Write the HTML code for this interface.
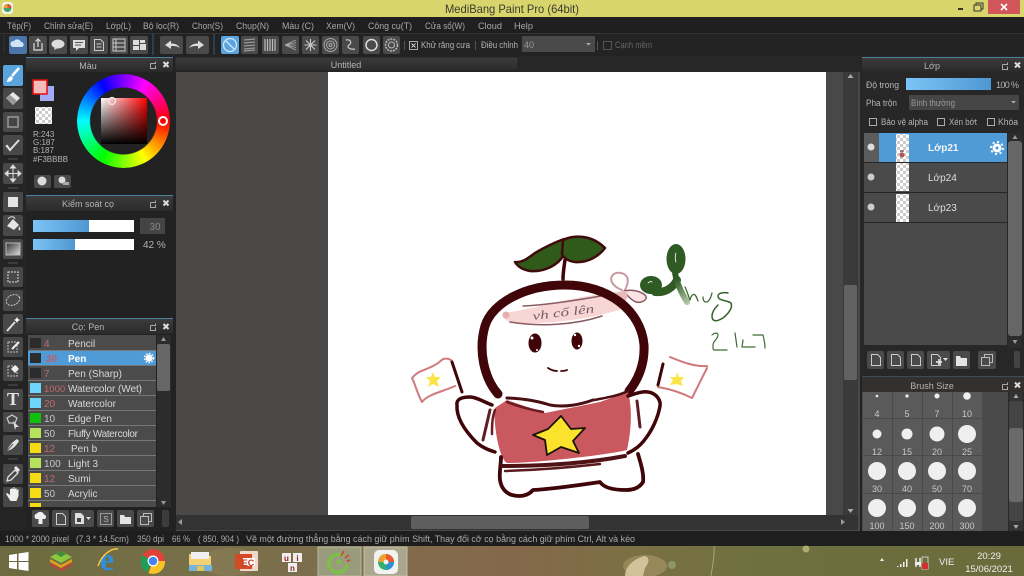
<!DOCTYPE html>
<html><head><meta charset="utf-8"><title>MediBang Paint Pro</title>
<style>
html,body{margin:0;padding:0;background:#222;overflow:hidden;width:1024px;height:576px}
svg{position:absolute;left:0;top:0}
text{font-family:"Liberation Sans","DejaVu Sans",sans-serif;font-size:9.5px;fill:#b4b4b4}
.m{font-size:9.5px;fill:#a8a8a8}
.c{text-anchor:middle}
.r{font-size:10px;fill:#d8d8d8}
.n{font-size:10px;fill:#c8c8c8}
.o{font-size:10px;fill:#c46a6a}
.s{font-size:9px;fill:#c8c8c8;text-anchor:middle}
#wheel{position:absolute;left:77px;top:74px;width:93px;height:94px;border-radius:50%;background:conic-gradient(from 30deg,#f0f,#f00 60deg,#ff0 120deg,#0f0 180deg,#0ff 240deg,#00f 300deg,#f0f 360deg);-webkit-mask:radial-gradient(circle,transparent 33px,#000 34px);mask:radial-gradient(circle,transparent 33px,#000 34px)}
#sq{position:absolute;left:101px;top:98px;width:46px;height:46px;background:linear-gradient(to top,#000,rgba(0,0,0,0)),linear-gradient(to right,#fff,#f00)}
</style></head><body>
<svg width="1024" height="576" viewBox="0 0 1024 576" xmlns="http://www.w3.org/2000/svg">
<defs>
<linearGradient id="tb" x1="0" y1="0" x2="1" y2="0"><stop offset="0" stop-color="#6c6a3e"/><stop offset=".2" stop-color="#77704a"/><stop offset=".33" stop-color="#7e6d4c"/><stop offset=".5" stop-color="#85684a"/><stop offset=".62" stop-color="#7a7044"/><stop offset=".75" stop-color="#6e7040"/><stop offset="1" stop-color="#6b6a3a"/></linearGradient>
<linearGradient id="sl" x1="0" y1="0" x2="1" y2="0"><stop offset="0" stop-color="#7cc4f6"/><stop offset="1" stop-color="#4e97d2"/></linearGradient>
<linearGradient id="hd" x1="0" y1="0" x2="0" y2="1"><stop offset="0" stop-color="#3c3c3c"/><stop offset="1" stop-color="#2a2a2a"/></linearGradient>
<linearGradient id="gr" x1="0" y1="0" x2="1" y2="1"><stop offset="0" stop-color="#333"/><stop offset="1" stop-color="#ddd"/></linearGradient>
<linearGradient id="fade" gradientUnits="userSpaceOnUse" x1="675" y1="280" x2="688" y2="304"><stop offset="0" stop-color="#2f5a23"/><stop offset="1" stop-color="#b5c8ac"/></linearGradient>
<pattern id="ck" width="6" height="6" patternUnits="userSpaceOnUse"><rect width="6" height="6" fill="#fff"/><rect width="3" height="3" fill="#ccc"/><rect x="3" y="3" width="3" height="3" fill="#ccc"/></pattern>
</defs>

<!-- Base -->
<rect width="1024" height="576" fill="#222"/>

<!-- Title bar -->
<rect width="1024" height="17" fill="#d8d56d"/>
<rect x="2" y="2" width="11" height="12" rx="3" fill="#f2f2e8"/>
<circle cx="7.5" cy="8" r="4" fill="#3fa56a"/><path d="M7.5 4a4 4 0 0 1 4 4h-4z" fill="#e8503a"/><path d="M3.5 8a4 4 0 0 1 4-4v4z" fill="#e8a03a"/>
<text x="445" y="13" style="font-size:12px;fill:#3c3c30" textLength="134" lengthAdjust="spacingAndGlyphs">MediBang Paint Pro (64bit)</text>
<rect x="958" y="8" width="5" height="2" fill="#333"/>
<rect x="974" y="5" width="7" height="6" fill="none" stroke="#333" stroke-width="1"/><path d="M976 5V3h7v6h-2" fill="none" stroke="#333"/>
<rect x="988" y="0" width="32" height="14" fill="#d15659"/>
<path d="M1001 4l6 6M1007 4l-6 6" stroke="#fff" stroke-width="1.6"/>

<!-- Menu -->
<rect y="17" width="1024" height="16" fill="#1f1f1f"/>
<text class="m" x="7" y="29" textLength="24" lengthAdjust="spacingAndGlyphs">Tệp(F)</text>
<text class="m" x="44" y="29" textLength="49" lengthAdjust="spacingAndGlyphs">Chỉnh sửa(E)</text>
<text class="m" x="106" y="29" textLength="25" lengthAdjust="spacingAndGlyphs">Lớp(L)</text>
<text class="m" x="143" y="29" textLength="36" lengthAdjust="spacingAndGlyphs">Bộ lọc(R)</text>
<text class="m" x="192" y="29" textLength="31" lengthAdjust="spacingAndGlyphs">Chọn(S)</text>
<text class="m" x="236" y="29" textLength="33" lengthAdjust="spacingAndGlyphs">Chụp(N)</text>
<text class="m" x="282" y="29" textLength="32" lengthAdjust="spacingAndGlyphs">Màu (C)</text>
<text class="m" x="326" y="29" textLength="29" lengthAdjust="spacingAndGlyphs">Xem(V)</text>
<text class="m" x="368" y="29" textLength="44" lengthAdjust="spacingAndGlyphs">Công cụ(T)</text>
<text class="m" x="425" y="29" textLength="40" lengthAdjust="spacingAndGlyphs">Cửa sổ(W)</text>
<text class="m" x="478" y="29" textLength="24" lengthAdjust="spacingAndGlyphs">Cloud</text>
<text class="m" x="514" y="29" textLength="19" lengthAdjust="spacingAndGlyphs">Help</text>

<!-- Toolbar -->
<rect y="33" width="1024" height="23" fill="#232323"/>
<rect y="33" width="1024" height="1" fill="#333"/>
<g fill="#4a4a4a">
<rect x="9" y="36" width="18" height="18" rx="2" fill="#4b74a8"/><rect x="29" y="36" width="18" height="18" rx="2"/><rect x="49" y="36" width="18" height="18" rx="2"/><rect x="70" y="36" width="18" height="18" rx="2"/><rect x="90" y="36" width="18" height="18" rx="2"/><rect x="110" y="36" width="18" height="18" rx="2"/><rect x="130" y="36" width="18" height="18" rx="2"/>
<rect x="160" y="36" width="23" height="18" rx="2"/><rect x="186" y="36" width="23" height="18" rx="2"/>
<rect x="221" y="36" width="18" height="18" rx="2" fill="#5aa4e0"/><rect x="241" y="36" width="17" height="18" rx="2"/><rect x="262" y="36" width="17" height="18" rx="2"/><rect x="282" y="36" width="17" height="18" rx="2"/><rect x="302" y="36" width="17" height="18" rx="2"/><rect x="322" y="36" width="17" height="18" rx="2"/><rect x="342" y="36" width="17" height="18" rx="2"/><rect x="363" y="36" width="17" height="18" rx="2"/><rect x="383" y="36" width="17" height="18" rx="2"/>
</g>
<path d="M153 34v21M214 34v21" stroke="#2b4a66" stroke-width="1.5"/>
<path d="M4 35v19" stroke="#333"/>
<!-- tb icons -->
<path d="M13 47a3 3 0 0 1 1-6 4 4 0 0 1 7 1 2.6 2.6 0 0 1 1 5z" fill="#cfe4f7"/>
<path d="M34 43v7h8v-7M38 47v-8M35.500 41.500l2.500-2.500 2.500 2.500" fill="none" stroke="#ddd" stroke-width="1.2"/>
<ellipse cx="58" cy="44" rx="6.500" ry="4.500" fill="#ddd"/><path d="M55 47l-1 3 4-2z" fill="#ddd"/>
<path d="M73 40h12v8h-6l-3 3v-3h-3z" fill="#ddd"/><path d="M75 42.500h8M75 45h6" stroke="#555"/>
<path d="M94.500 39.500h6l3 3v8h-9z M96.500 44h5M96.500 47h5" fill="none" stroke="#ccc"/>
<path d="M113 39h12v12h-12z M113 43h12M113 47h12M116 39v12" fill="none" stroke="#ccc"/>
<path d="M133 40h6v5h-6zM140 44h6v6h-6zM133 46h6v4h-6zM140 40h5v3h-5z" fill="#ddd"/>
<path d="M165 45l6-4.500v3c4 0 7 1 9 4.500-3-2-5-2-9-2v3z" fill="#ddd"/>
<path d="M204 45l-6-4.500v3c-4 0-7 1-9 4.500 3-2 5-2 9-2v3z" fill="#ddd"/>
<circle cx="230" cy="45" r="6.500" fill="none" stroke="#d5e8f8" stroke-width="1.300"/><path d="M225.500 40.500l9 9" stroke="#d5e8f8" stroke-width="1.300"/>
<path d="M244 40l11-1M244 43l11-1M244 46l11-1M244 49l11-1M244 51l11-1" stroke="#999" stroke-width="1.200"/>
<path d="M265 39v12M267.500 39v12M270 39v12M272.500 39v12M275 39v12" stroke="#bbb" stroke-width="1.200"/>
<path d="M285 45l11-5M285 45l11 0M285 45l11 5M285 45l11-2.500M285 45l11 2.500" stroke="#aaa" stroke-width=".8"/>
<path d="M310.500 39v12M304.500 45h12M306 40.500l9 9M315 40.500l-9 9" stroke="#ccc" stroke-width="1.100"/>
<circle cx="330.500" cy="45" r="6.500" fill="none" stroke="#aaa" stroke-width="1"/><circle cx="330.500" cy="45" r="4" fill="none" stroke="#aaa"/><circle cx="330.500" cy="45" r="1.500" fill="none" stroke="#aaa"/>
<path d="M346 40c5-1 6 3 3 5-3 2 1 5 6 4" fill="none" stroke="#ccc" stroke-width="1.200"/>
<circle cx="371.500" cy="45" r="5.500" fill="none" stroke="#ddd" stroke-width="1.500"/>
<circle cx="391.500" cy="45" r="6" fill="none" stroke="#bbb" stroke-width="1.500" stroke-dasharray="2 1"/><circle cx="391.500" cy="45" r="3" fill="none" stroke="#bbb"/>
<path d="M404.500 41v9M475.500 41v9M597.500 41v9" stroke="#555"/>
<rect x="409.500" y="41.500" width="8" height="8" fill="none" stroke="#aaa"/><path d="M411.500 43.500l4 4M415.500 43.500l-4 4" stroke="#ccc"/>
<text x="421" y="48" style="font-size:9px" textLength="49" lengthAdjust="spacingAndGlyphs">Khử răng cưa</text>
<text x="481" y="48" style="font-size:9px" textLength="37" lengthAdjust="spacingAndGlyphs">Điều chỉnh</text>
<rect x="522" y="36" width="73" height="16" fill="#4a4a4a" rx="1"/>
<text x="524" y="48" style="font-size:9px;fill:#999">40</text>
<path d="M586 43h5l-2.500 2.500z" fill="#aaa"/>
<rect x="603.500" y="41.500" width="8" height="8" fill="none" stroke="#555"/>
<text x="615" y="48" style="font-size:9px;fill:#666" textLength="37" lengthAdjust="spacingAndGlyphs">Cạnh mềm</text>

<!-- Left tools -->
<rect y="56" width="26" height="475" fill="#242424"/>
<g fill="#484848">
<rect x="3" y="65" width="20" height="21" rx="2" fill="#5aa4dc"/><rect x="3" y="88" width="20" height="21" rx="2"/><rect x="3" y="112" width="20" height="20" rx="2"/><rect x="3" y="135" width="20" height="20" rx="2"/><rect x="3" y="163" width="20" height="21" rx="2"/><rect x="3" y="192" width="20" height="20" rx="2"/><rect x="3" y="215" width="20" height="21" rx="2"/><rect x="3" y="239" width="20" height="20" rx="2"/><rect x="3" y="267" width="20" height="20" rx="2"/><rect x="3" y="290" width="20" height="21" rx="2"/><rect x="3" y="314" width="20" height="20" rx="2"/><rect x="3" y="337" width="20" height="20" rx="2"/><rect x="3" y="360" width="20" height="21" rx="2"/><rect x="3" y="389" width="20" height="21" rx="2"/><rect x="3" y="412" width="20" height="20" rx="2"/><rect x="3" y="435" width="20" height="20" rx="2"/><rect x="3" y="464" width="20" height="20" rx="2"/><rect x="3" y="487" width="20" height="20" rx="2"/>
</g>
<path d="M8 159h10M8 188h10M8 263h10M8 385h10M8 459h10" stroke="#555"/>
<path d="M19 68l-7 8" stroke="#fff" stroke-width="2.500"/><path d="M7 82c0-3 2-5 4-6l2 2c-1 3-3 4-6 4z" fill="#fff"/>
<path d="M6 98l7-6 7 6-7 7z" fill="#e8e8e8"/><path d="M6 98l4-3 7 6-4 4z" fill="#999"/>
<rect x="8" y="117" width="10" height="10" fill="#444" stroke="#999" stroke-width="1.500"/>
<path d="M7 146l3 4 9-10" fill="none" stroke="#ddd" stroke-width="2"/><circle cx="7" cy="146" r="1.300" fill="#ddd"/>
<path d="M13 166v15M6 173.500h14M13 165l-2.500 3h5zM13 182l-2.500-3h5zM5 173.500l3-2.500v5zM21 173.500l-3-2.500v5z" stroke="#ddd" fill="#ddd"/>
<rect x="8" y="197" width="10" height="10" fill="#e4e4e4"/>
<path d="M7 226l6-7 6 6-5 5z" fill="#e4e4e4"/><path d="M8 219c2-3 6-3 7 0" fill="none" stroke="#ddd"/><path d="M19 226c1 2 2 3 1 4s-2 0-1-4z" fill="#ddd"/>
<rect x="6" y="243" width="14" height="12" fill="url(#gr)" stroke="#bbb"/>
<rect x="8" y="272" width="10" height="10" fill="none" stroke="#ddd" stroke-dasharray="2 1"/>
<ellipse cx="13" cy="300" rx="7" ry="5" fill="none" stroke="#ccc" stroke-dasharray="2 1" transform="rotate(-25 13 300)"/>
<path d="M7 331l8-9" stroke="#ddd" stroke-width="2"/><path d="M17 317l1 2 2 1-2 1-1 2-1-2-2-1 2-1z" fill="#fff"/>
<rect x="8" y="342" width="9" height="10" fill="none" stroke="#bbb" stroke-dasharray="2 1"/><path d="M12 349l7-7" stroke="#eee" stroke-width="2"/>
<rect x="8" y="366" width="9" height="10" fill="none" stroke="#bbb" stroke-dasharray="2 1"/><path d="M11 369l4-4 4 4-4 4z" fill="#eee"/>
<text x="13" y="405" class="c" style="font-family:'Liberation Serif',serif;font-size:18px;font-weight:bold;fill:#e4e4e4">T</text>
<path d="M7 418l5-3 5 3-2 5-6 0z" fill="none" stroke="#ccc" stroke-width="1.200"/><path d="M13 421l6 6-3 0-1 3z" fill="#ddd"/>
<path d="M7 451c1-4 5-9 10-12l2 2c-3 5-7 9-12 10z" fill="#e4e4e4"/><path d="M7 451l6-7" stroke="#555"/>
<path d="M7 481l1-4 7-7 3 3-7 7z" fill="none" stroke="#ddd" stroke-width="1.300"/><path d="M14 468l2-2 4 4-2 2z" fill="#eee"/>
<path d="M8 497l-2-3 1-1 3 2v-6h1.500v-1h1v1l1 0v-2h1v2l1 0v-1h1v2l1 0v-1h1v7l-2 5h-6z" fill="#eee"/>

<!-- Left panels -->
<rect x="26" y="56" width="147" height="137" fill="#222"/>
<rect x="26" y="57" width="147" height="15" fill="url(#hd)"/><rect x="26" y="57" width="147" height="1" fill="#4d7f9f"/>
<text class="c" x="88" y="69" style="font-size:9px">Màu</text>
<path d="M150.500 63.500h5v-2M150.500 63.500v5h5v-3" fill="none" stroke="#aaa"/>
<path d="M163.500 62l5 5M168.500 62l-5 5" stroke="#ddd" stroke-width="2"/>
<rect x="40" y="86" width="14" height="15" fill="#a3abf2"/>
<rect x="33" y="80" width="14" height="14" fill="#f3bbbb" stroke="#e01010" stroke-width="1.500"/>
<rect x="35" y="107" width="17" height="17" fill="url(#ck)"/>
<text x="33" y="137" style="font-size:8px">R:243</text>
<text x="33" y="145" style="font-size:8px">G:187</text>
<text x="33" y="153" style="font-size:8px">B:187</text>
<text x="33" y="162" style="font-size:8px">#F3BBBB</text>
<rect x="34" y="175" width="17" height="13" rx="2" fill="#4a4a4a"/><rect x="54" y="175" width="17" height="13" rx="2" fill="#4a4a4a"/>
<circle cx="42" cy="181" r="4.500" fill="#ddd"/><circle cx="62" cy="180" r="3.500" fill="#ddd"/><rect x="63" y="182" width="6" height="3" fill="#aaa"/>

<rect x="26" y="195" width="147" height="122" fill="#222"/>
<rect x="26" y="196" width="147" height="15" fill="url(#hd)"/><rect x="26" y="195" width="147" height="1" fill="#4d7f9f"/>
<text class="c" x="88" y="207" style="font-size:9px">Kiểm soát cọ</text>
<path d="M150.500 202.500h5v-2M150.500 202.500v5h5v-3" fill="none" stroke="#aaa"/>
<path d="M163.500 200.500l5 5M168.500 200.500l-5 5" stroke="#ddd" stroke-width="2"/>
<rect x="33" y="220" width="101" height="12" fill="#fff"/><rect x="33" y="220" width="56" height="12" fill="url(#sl)"/>
<rect x="140" y="218" width="25" height="16" fill="#444"/><text x="155" y="230" class="c" style="font-size:10px;fill:#888">30</text>
<rect x="33" y="239" width="101" height="11" fill="#fff"/><rect x="33" y="239" width="42" height="11" fill="url(#sl)"/>
<text x="143" y="248" style="font-size:10px">42 %</text>

<!-- Brush list -->
<rect x="26" y="318" width="147" height="213" fill="#222"/>
<rect x="26" y="319" width="147" height="15" fill="url(#hd)"/><rect x="26" y="318" width="147" height="1" fill="#4d7f9f"/>
<text class="c" x="88" y="330" style="font-size:9px">Cọ: Pen</text>
<path d="M150.500 325.500h5v-2M150.500 325.500v5h5v-3" fill="none" stroke="#aaa"/>
<path d="M163.500 324l5 5M168.500 324l-5 5" stroke="#ddd" stroke-width="2"/>
<rect x="28" y="335" width="128" height="172" fill="#4b4b4b"/>
<rect x="28" y="351" width="128" height="15" fill="#4f9bd8"/>
<path d="M28 350.500h128M28 365.500h128M28 380.500h128M28 395.500h128M28 410.500h128M28 425.500h128M28 440.500h128M28 455.500h128M28 470.500h128M28 485.500h128M28 500.500h128" stroke="#777"/>
<g>
<rect x="30" y="338" width="11" height="10" fill="#2c2c2c"/><rect x="30" y="353" width="11" height="10" fill="#2c2c2c"/><rect x="30" y="368" width="11" height="10" fill="#2c2c2c"/>
<rect x="30" y="383" width="11" height="10" fill="#6ed4fb"/><rect x="30" y="398" width="11" height="10" fill="#6ed4fb"/><rect x="30" y="413" width="11" height="10" fill="#0fc00f"/><rect x="30" y="428" width="11" height="10" fill="#b5e45c"/><rect x="30" y="443" width="11" height="10" fill="#f5da14"/><rect x="30" y="458" width="11" height="10" fill="#b5e45c"/><rect x="30" y="473" width="11" height="10" fill="#f5da14"/><rect x="30" y="488" width="11" height="10" fill="#f5da14"/><rect x="30" y="503" width="11" height="4" fill="#f5da14"/>
</g>
<text class="o" x="44" y="347">4</text><text class="r" x="68" y="347">Pencil</text>
<text class="o" x="46" y="362" style="font-weight:bold;fill:#c06060">30</text><text class="r" x="68" y="362" style="font-weight:bold;fill:#fff">Pen</text>
<text class="o" x="44" y="377">7</text><text class="r" x="68" y="377">Pen (Sharp)</text>
<text class="o" x="44" y="392" style="font-size:9.500px">1000</text><text class="r" x="68" y="392" textLength="74">Watercolor (Wet)</text>
<text class="o" x="44" y="407">20</text><text class="r" x="68" y="407">Watercolor</text>
<text class="n" x="44" y="422">10</text><text class="r" x="68" y="422">Edge Pen</text>
<text class="n" x="44" y="437">50</text><text class="r" x="68" y="437" textLength="70">Fluffy Watercolor</text>
<text class="o" x="44" y="452">12</text><text class="r" x="71" y="452">Pen b</text>
<text class="n" x="44" y="467">100</text><text class="r" x="68" y="467">Light 3</text>
<text class="o" x="44" y="482">12</text><text class="r" x="68" y="482">Sumi</text>
<text class="n" x="44" y="497">50</text><text class="r" x="68" y="497">Acrylic</text>
<circle cx="149" cy="358" r="3.500" fill="#fff"/><circle cx="149" cy="358" r="4.500" fill="none" stroke="#fff" stroke-dasharray="1.500 1.500" stroke-width="1.500"/>
<rect x="157" y="335" width="14" height="172" fill="#2c2c2c"/>
<path d="M163.500 337l-2.500 4h5z M161 501h5l-2.500 4z" fill="#999"/>
<rect x="157" y="344" width="13" height="47" rx="2" fill="#666"/>
<g fill="#4a4a4a">
<rect x="32" y="510" width="17" height="17" rx="2"/><rect x="52" y="510" width="17" height="17" rx="2"/><rect x="71" y="510" width="23" height="17" rx="2"/><rect x="97" y="510" width="17" height="17" rx="2"/><rect x="117" y="510" width="17" height="17" rx="2"/><rect x="137" y="510" width="17" height="17" rx="2"/>
</g>
<rect x="162" y="510" width="7" height="17" rx="2" fill="#3c3c3c"/>
<path d="M36 519a3 3 0 0 1 1-5.500 4 4 0 0 1 7 1 2.500 2.500 0 0 1 1 4.500zM38.500 519h4v5h-4z" fill="#eee"/>
<path d="M56.500 513.500h6l3 3v8h-9z" fill="none" stroke="#ccc"/>
<path d="M75 513h6l3 3v8h-9z" fill="#ddd"/><rect x="77" y="518" width="4" height="4" fill="#444"/><path d="M86 517h5l-2.500 3z" fill="#ddd"/>
<path d="M100.500 513.500h11v11h-11z" fill="none" stroke="#999"/><text x="106" y="522" class="c" style="font-size:8px">S</text>
<path d="M120 515h4l1 2h6v7h-11z" fill="#e4e4e4"/>
<path d="M140.500 516.500h8v8h-8zM143.500 516.500v-3h8v8h-3" fill="none" stroke="#bbb"/>

<!-- Canvas area -->
<rect x="176" y="56" width="684" height="475" fill="#4a4846"/>
<rect x="176" y="56" width="684" height="16" fill="#272727"/>
<rect x="175" y="57" width="343" height="14" fill="url(#hd)" stroke="#222"/>
<text x="346" y="68" class="c" style="font-size:9px">Untitled</text>
<rect x="328" y="72" width="498" height="443" fill="#fff"/>
<rect x="843" y="72" width="15" height="443" fill="#3a3a3a"/>
<rect x="844" y="285" width="13" height="95" rx="2" fill="#626262"/>
<path d="M850.500 74l-3 4h6zM847.500 509h6l-3 4z" fill="#aaa"/>
<rect x="176" y="515" width="682" height="15" fill="#333"/>
<rect x="411" y="516" width="178" height="13" rx="2" fill="#5e5e5e"/>
<path d="M178 522l4-3v6zM841 519v6l4-3z" fill="#999"/>

<!-- Drawing -->
<g fill="none" stroke-linecap="round" stroke-linejoin="round">
<!-- headband -->
<path d="M504 313c30-4 65-16 118-22 6 5 5 13 0 18-30 10-80 17-112 13-6-2-8-6-6-9z" fill="#f8d6d6" stroke="none"/>
<circle cx="506" cy="315" r="3.500" fill="#e8aeb0" stroke="none"/>
<path d="M523 306c25-1 55-6 78-10" stroke="#8a5a62" stroke-width="1.500"/>
<path d="M510 322c30 5 65 3 92-6" stroke="#8a5a62" stroke-width="1.500"/>
<!-- bow -->
<path d="M622 290c-8-3-13-9-10-14 3-5 12-4 15 1 2 4 0 9-2 13" fill="#fff" stroke="#c89aa0" stroke-width="2"/>
<path d="M624 291c7-2 16 0 21 4 3 3 0 6-4 7-6 2-12-4-17-11z" fill="#fbe4e4" stroke="#8a5a62" stroke-width="1.500"/>
<path d="M612 296c6-4 10-5 14-5 2 4 2 8-1 10z" fill="#eab9bc" stroke="none"/>
<!-- head -->
<path d="M498 394C484 378 478 350 485 326 492 303 525 285 565 285 608 285 641 310 644 345 645 364 638 380 629 391" stroke="#3f0508" stroke-width="9"/>
<!-- leaf -->
<path d="M565 260c-1 7-2 13-2 19" stroke="#3f0508" stroke-width="3.500"/>
<path d="M515 262c8 1 14-5 20-9 10-6 18-10 29-14 2 6 3 12-3 20-8 9-20 13-31 12-6-1-12-4-15-9z" fill="#2f5a1a" stroke="#3f0b0b" stroke-width="2.500"/>
<path d="M563 240c10-5 28-6 42 8-6 8-17 15-30 14-8-1-12-5-13-8z" fill="#2f5a1a" stroke="#3f0b0b" stroke-width="2.500"/>
<!-- eyes -->
<ellipse cx="535" cy="343" rx="6.500" ry="9.500" fill="#3f0508" stroke="none"/>
<ellipse cx="577" cy="341" rx="5.500" ry="8.500" fill="#3f0508" stroke="none"/>
<circle cx="532" cy="338" r="1.500" fill="#fff" stroke="none"/><circle cx="537" cy="350" r="1" fill="#fff" stroke="none"/>
<circle cx="575" cy="335" r="1.200" fill="#fff" stroke="none"/><circle cx="579" cy="346" r="1.200" fill="#fff" stroke="none"/>
<path d="M548 368c3 2 6 3 9 3M561 371c2 0 4 0 6-1" stroke="#3f0508" stroke-width="1.800"/>
<!-- shirt -->
<path d="M495 408l12-8 38 13 55-11 28-10c4 15 4 35-1 58-20 5-90 13-120 13-8-4-14-40-12-55z" fill="#c9595e" stroke="none"/>
<path d="M507 398c20 1 30 3 43 7 15 3 32-1 43-5" stroke="#4a0f12" stroke-width="3"/>
<path d="M507 402c10 4 25 8 36 10" stroke="#6b1c20" stroke-width="2.500"/>
<path d="M594 400c10-2 24-4 34-9" stroke="#4a0f12" stroke-width="2.500"/>
<path d="M495 410c-3 8-3 16-3 24" stroke="#6a1c20" stroke-width="2.500"/>
<!-- wings -->
<path d="M490 410l-7 30" stroke="#5c2025" stroke-width="3"/>
<path d="M637 401l3 26" stroke="#5c2025" stroke-width="3"/>
<!-- arms -->
<path d="M492 405c-8-3-16-8-22-8-8 0-14 2-13 8-1 14 10 28 20 38 6 5 12 7 18 9" stroke="#3f0508" stroke-width="3.500"/>
<path d="M628 396c6-2 14-5 20-4 8 1 13 8 12 14-2 12-8 24-14 32-5 7-11 12-18 15" stroke="#3f0508" stroke-width="3.500"/>
<!-- trouser / legs -->
<path d="M501 457c0 8-2 16-1 23 1 7 5 13 12 15 8 2 16 1 21-5 20-1 46-5 67-8 4 6 14 8 26 8 8 0 14-3 17-8 1-8-2-18-5-28" stroke="#3f0508" stroke-width="3.800"/>
<path d="M503 466c40 0 85-3 122-10" stroke="#4f1215" stroke-width="4"/>
<path d="M505 471c35-1 60-3 95-7" stroke="#5b1a1d" stroke-width="2.500"/>
<!-- star -->
<path d="M561 416l10 13 14-1-12 13 6 12-18-6-14 8-2-15-12-5 15-6z" fill="#fbe22c" stroke="#1a1208" stroke-width="1.800"/>
<!-- flags -->
<path d="M412 378c8-10 18-7 31-19 4-1 7 0 9 2M412 378c4 8 5 15 10 24M422 402c6-8 20-10 33-16" stroke="#d07b7c" stroke-width="2"/>
<path d="M433 372l2 5 6 0-4 4 2 6-6-3-5 3 2-6-4-4 5 0z" fill="#fbe448" stroke="none"/>
<path d="M452 362l10 30" stroke="#3f0508" stroke-width="3"/>
<path d="M670 357c12 5 25 10 37 9M707 368c-5 10-10 20-15 30M692 398c-10-5-22-9-34-11" stroke="#d0787a" stroke-width="2"/>
<path d="M677 372l2 5 5 0-3 4 2 5-6-2-7 1 3-5-3-3 6 0z" fill="#fbe448" stroke="none"/>
<path d="M663 364l-5 21" stroke="#3f0508" stroke-width="3"/>
<!-- signature -->
<ellipse cx="651" cy="285" rx="11" ry="9" fill="#2f5a23" stroke="none"/>
<ellipse cx="676" cy="259" rx="9.500" ry="15" fill="#2f5a23" stroke="none"/>
<path d="M655 292c10 1 18-4 22-12" stroke="#2f5a23" stroke-width="8"/>
<path d="M675 272c1 10 6 20 12 30" stroke="url(#fade)" stroke-width="6"/>
<path d="M648 283c1-1 3-2 4-1M676 253c-1 3-1 6 0 9" stroke="#fff" stroke-width=".8"/>
<path d="M685 287c2 4 3 8 5 13 1-4 3-7 5-5 2 2 2 4 3 6M703 297c0 3 1 5 3 5 3 0 5-5 6-9" stroke="#3d6b33" stroke-width="1.300"/>
<path d="M728 293c-4-1-10 0-10 3 0 5 9 4 13 7 2 5-2 10-8 15-5 3-11 5-11-2 0-4 3-8 6-11" stroke="#345f2c" stroke-width="1.500"/>
<path d="M712 335c2-2 6-3 6 0 0 4-5 6-5 10 0 3 0 5 1 5h13M735 333l2 14M743 340l-1 7h13M753 335h10c1 4 2 9 2 13" stroke="#3d6b33" stroke-width="1.200"/>
</g>
<text x="533" y="320" transform="rotate(-7 533 320)" style="font-family:'Liberation Serif',serif;font-style:italic;font-size:12px;fill:#7a5a66" textLength="62" lengthAdjust="spacingAndGlyphs">vh cố lên</text>

<!-- Right panel -->
<rect x="860" y="56" width="164" height="320" fill="#272727"/>
<rect x="862" y="57" width="162" height="15" fill="url(#hd)"/><rect x="862" y="57" width="162" height="1" fill="#4d7f9f"/>
<text x="932" y="69" class="c" style="font-size:9px">Lớp</text>
<path d="M1002.500 64.500h5v-2M1002.500 64.500v5h5v-3" fill="none" stroke="#aaa"/>
<path d="M1015 62.500l5 5M1020 62.500l-5 5" stroke="#ddd" stroke-width="2"/>
<text x="866" y="88" style="font-size:9.500px" textLength="33" lengthAdjust="spacingAndGlyphs">Độ trong</text>
<rect x="906" y="78" width="85" height="12" fill="url(#sl)"/>
<text x="996" y="88" style="font-size:9px" textLength="23">100 %</text>
<text x="866" y="106" style="font-size:9.500px" textLength="31" lengthAdjust="spacingAndGlyphs">Pha trộn</text>
<rect x="909" y="95" width="110" height="15" rx="1" fill="#454545"/>
<text x="911" y="106" style="font-size:9.500px;fill:#999" textLength="44" lengthAdjust="spacingAndGlyphs">Bình thường</text>
<path d="M1011 101h5l-2.500 2.500z" fill="#aaa"/>
<rect x="869.500" y="118.500" width="7" height="7" fill="none" stroke="#aaa"/><text x="881" y="125" style="font-size:9px" textLength="47" lengthAdjust="spacingAndGlyphs">Bảo vệ alpha</text>
<rect x="937.500" y="118.500" width="7" height="7" fill="none" stroke="#aaa"/><text x="949" y="125" style="font-size:9px" textLength="28" lengthAdjust="spacingAndGlyphs">Xén bớt</text>
<rect x="987.500" y="118.500" width="7" height="7" fill="none" stroke="#aaa"/><text x="998" y="125" style="font-size:9px" textLength="20" lengthAdjust="spacingAndGlyphs">Khóa</text>
<rect x="864" y="133" width="143" height="212" fill="#4a4a4a"/>
<rect x="864" y="133" width="15" height="30" fill="#5c5c5c"/>
<rect x="879" y="133" width="128" height="30" fill="#4f9bd8"/>
<path d="M864 162.500h143M864 192.500h143M864 222.500h143" stroke="#262626"/>
<circle cx="871" cy="147" r="3.500" fill="#ddd"/><circle cx="871" cy="177" r="3.500" fill="#ccc"/><circle cx="871" cy="207" r="3.500" fill="#ccc"/>
<rect x="896" y="134" width="13" height="28" fill="url(#ck)"/>
<rect x="896" y="163" width="13" height="28" fill="url(#ck)"/>
<rect x="896" y="194" width="13" height="28" fill="url(#ck)"/>
<circle cx="902" cy="155" r="2.500" fill="#b85555"/><path d="M900 151h4" stroke="#6a1a1a"/>
<text x="928" y="151" style="font-size:10px;font-weight:bold;fill:#f4f4f4">Lớp21</text>
<text x="928" y="181" style="font-size:10px;fill:#ddd">Lớp24</text>
<text x="928" y="211" style="font-size:10px;fill:#ddd">Lớp23</text>
<circle cx="997" cy="148" r="4.500" fill="#fff"/><circle cx="997" cy="148" r="6" fill="none" stroke="#fff" stroke-width="2" stroke-dasharray="2 2.700"/><circle cx="997" cy="148" r="1.500" fill="#4f9bd8"/>
<rect x="1008" y="133" width="14" height="215" fill="#2c2c2c"/>
<path d="M1015 135l-2.500 4h5zM1012.500 340h5l-2.500 4z" fill="#999"/>
<rect x="1008" y="141" width="14" height="195" rx="3" fill="#666"/>
<g fill="#4a4a4a">
<rect x="867" y="351" width="17" height="18" rx="2"/><rect x="887" y="351" width="17" height="18" rx="2"/><rect x="907" y="351" width="17" height="18" rx="2"/><rect x="927" y="351" width="23" height="18" rx="2"/><rect x="953" y="351" width="17" height="18" rx="2"/><rect x="978" y="351" width="18" height="18" rx="2"/>
</g>
<rect x="1014" y="351" width="6" height="17" rx="2" fill="#444"/>
<path d="M871.500 354.500h6l3 3v8h-9zM891.500 354.500h6l3 3v8h-9zM911.500 354.500h6l3 3v8h-9zM931.500 354.500h6l3 3v8h-9z" fill="none" stroke="#ccc"/>
<path d="M936 362h6M939 359v6" stroke="#eee" stroke-width="1.500"/><path d="M943 358h5l-2.500 3z" fill="#ddd"/>
<path d="M956 356h4l1 2h6v8h-11z" fill="#e4e4e4"/>
<path d="M981.500 357.500h8v8h-8zM984.500 357.500v-3h8v8h-3" fill="none" stroke="#bbb"/>
<!-- Brush size -->
<rect x="862" y="376" width="162" height="156" fill="#2a2a2a"/>
<rect x="862" y="377" width="162" height="15" fill="#34302e"/><rect x="862" y="376" width="162" height="1" fill="#3e4c58"/>
<text x="932" y="389" class="c" style="font-size:9px">Brush Size</text>
<path d="M1002.500 384.500h5v-2M1002.500 384.500v5h5v-3" fill="none" stroke="#aaa"/>
<path d="M1015 382.500l5 5M1020 382.500l-5 5" stroke="#ddd" stroke-width="2"/>
<rect x="862" y="392" width="146" height="139" fill="#4a4a4a"/>
<g fill="#5a5a5a">
<rect x="863" y="392" width="29" height="26"/><rect x="893" y="392" width="29" height="26"/><rect x="923" y="392" width="29" height="26"/><rect x="953" y="392" width="29" height="26"/>
<rect x="863" y="419" width="29" height="36"/><rect x="893" y="419" width="29" height="36"/><rect x="923" y="419" width="29" height="36"/><rect x="953" y="419" width="29" height="36"/>
<rect x="863" y="456" width="29" height="37"/><rect x="893" y="456" width="29" height="37"/><rect x="923" y="456" width="29" height="37"/><rect x="953" y="456" width="29" height="37"/>
<rect x="863" y="494" width="29" height="37"/><rect x="893" y="494" width="29" height="37"/><rect x="923" y="494" width="29" height="37"/><rect x="953" y="494" width="29" height="37"/>
</g>
<g fill="#efefef">
<circle cx="877" cy="396" r="1.300"/><circle cx="907" cy="396" r="1.600"/><circle cx="937" cy="396" r="2.500"/><circle cx="967" cy="396" r="3.800"/>
<circle cx="877" cy="434" r="4.500"/><circle cx="907" cy="434" r="5.500"/><circle cx="937" cy="434" r="7.500"/><circle cx="967" cy="434" r="9"/>
<circle cx="877" cy="471" r="9"/><circle cx="907" cy="471" r="9"/><circle cx="937" cy="471" r="9"/><circle cx="967" cy="471" r="9"/>
<circle cx="877" cy="508" r="9"/><circle cx="907" cy="508" r="9"/><circle cx="937" cy="508" r="9"/><circle cx="967" cy="508" r="9"/>
</g>
<text class="s" x="877" y="417">4</text><text class="s" x="907" y="417">5</text><text class="s" x="937" y="417">7</text><text class="s" x="967" y="417">10</text>
<text class="s" x="877" y="455">12</text><text class="s" x="907" y="455">15</text><text class="s" x="937" y="455">20</text><text class="s" x="967" y="455">25</text>
<text class="s" x="877" y="492">30</text><text class="s" x="907" y="492">40</text><text class="s" x="937" y="492">50</text><text class="s" x="967" y="492">70</text>
<text class="s" x="877" y="529">100</text><text class="s" x="907" y="529">150</text><text class="s" x="937" y="529">200</text><text class="s" x="967" y="529">300</text>
<rect x="1009" y="392" width="14" height="139" fill="#333"/>
<path d="M1016 394l-2.500 4h5zM1013.500 525h5l-2.500 4z" fill="#aaa"/>
<rect x="1009" y="401" width="14" height="120" rx="3" fill="#444"/>
<rect x="1009" y="428" width="14" height="74" rx="3" fill="#6a6a6a"/>

<!-- Status bar -->
<rect y="531" width="1024" height="15" fill="#1e1e1e"/>
<text x="5" y="542" style="font-size:9px;fill:#aaa" textLength="64" lengthAdjust="spacingAndGlyphs">1000 * 2000 pixel</text>
<text x="76" y="542" style="font-size:9px;fill:#aaa" textLength="53" lengthAdjust="spacingAndGlyphs">(7.3 * 14.5cm)</text>
<text x="137" y="542" style="font-size:9px;fill:#aaa" textLength="27" lengthAdjust="spacingAndGlyphs">350 dpi</text>
<text x="172" y="542" style="font-size:9px;fill:#aaa" textLength="18" lengthAdjust="spacingAndGlyphs">66 %</text>
<text x="198" y="542" style="font-size:9px;fill:#aaa" textLength="41" lengthAdjust="spacingAndGlyphs">( 850, 904 )</text>
<text x="246" y="542" style="font-size:9px;fill:#aaa" textLength="389" lengthAdjust="spacingAndGlyphs">Vẽ một đường thẳng bằng cách giữ phím Shift, Thay đổi cỡ cọ bằng cách giữ phím Ctrl, Alt và kéo</text>

<!-- Taskbar -->
<rect y="546" width="1024" height="30" fill="url(#tb)"/>
<ellipse cx="645" cy="566" rx="22" ry="11" fill="#b3a070" opacity=".5"/>
<path d="M625 576c0-10 10-18 20-20 6 2 3 8 0 12l-2 8z" fill="#d8c8a0" opacity=".9"/>
<ellipse cx="230" cy="562" rx="30" ry="14" fill="#9c8a62" opacity=".35"/>
<circle cx="806" cy="549" r="3.500" fill="#c8c884" opacity=".7"/><circle cx="672" cy="565" r="4" fill="#9fb080" opacity=".6"/>
<path d="M714 546c1 10-2 22-3 30" stroke="#c8c8a0" stroke-width="1" fill="none" opacity=".6"/>
<path d="M9 555l8-1.200v7.200H9zM18.500 553.500l10-1.500v9h-10zM9 562h8v7.200l-8-1.200zM18.500 562h10v9l-10-1.500z" fill="#fff"/>
<path d="M61 551l11 6-11 6-11-6z" fill="#8dc63f"/><path d="M50 559l11 6 11-6v3l-11 6-11-6z" fill="#e3a01b"/><path d="M50 563l11 6 11-6v2l-11 6-11-6z" fill="#cf3a3a"/><path d="M56 554l5-3 5 3-5 3z" fill="#3d8d3d"/>
<text x="107" y="570" class="c" style="font-family:'Liberation Serif',serif;font-size:32px;font-weight:bold;fill:#2e8fe0">e</text>
<path d="M98 566c4-12 14-18 20-17" fill="none" stroke="#f6c544" stroke-width="1.500"/>
<circle cx="153" cy="561" r="12" fill="#dc4437"/><path d="M153 561l-10.500-5.500a12 12 0 0 0 5 17z" fill="#1f9d55"/><path d="M153 561l-4.500 12a12 12 0 0 0 16.500-12z" fill="#f7c325"/><circle cx="153" cy="561" r="5.500" fill="#fff"/><circle cx="153" cy="561" r="4.300" fill="#4285f4"/>
<path d="M189 554h10l2 2h10v15h-22z" fill="#f2d272"/><rect x="191" y="552" width="18" height="7" fill="#f0f0f0"/><rect x="189" y="565" width="23" height="6" fill="#74b4d8"/><rect x="197" y="566" width="7" height="5" fill="#e4c45c"/>
<rect x="240" y="551" width="18" height="20" rx="1" fill="#f2d8c8"/><rect x="235" y="554" width="17" height="15" fill="#d24a26"/><rect x="243" y="558" width="12" height="8" fill="#fff"/><text x="248" y="566" class="c" style="font-size:9px;font-weight:bold;fill:#c63a1c">EC</text>
<rect x="282" y="553" width="9" height="9" fill="#eee"/><rect x="293" y="553" width="9" height="9" fill="#eee"/><rect x="288" y="563" width="9" height="9" fill="#eee"/>
<text x="286.500" y="561" class="c" style="font-size:8px;font-weight:bold;fill:#a02020">u</text><text x="297.500" y="561" class="c" style="font-size:8px;font-weight:bold;fill:#a02020">i</text><text x="292.500" y="571" class="c" style="font-size:8px;font-weight:bold;fill:#a02020">n</text>
<rect x="318" y="547" width="43" height="29" fill="#9a9a7c" stroke="#b8b8a0"/>
<rect x="364" y="547" width="43" height="29" fill="#aaa78e" stroke="#c0c0a8"/>
<path d="M343 556a9 9 0 1 0 4 8" fill="none" stroke="#7cc04a" stroke-width="3.500"/><circle cx="339" cy="562" r="2.500" fill="#7cc04a"/><path d="M341 556l3-5M345 558l4-3M347 561l3-1" stroke="#d63f2f" stroke-width="1.500"/>
<rect x="374" y="550" width="24" height="24" rx="5" fill="#f2f2f0"/>
<circle cx="386" cy="562" r="8" fill="#35b06a"/><path d="M386 554a8 8 0 0 1 8 8h-8z" fill="#e9582f"/><path d="M378 562a8 8 0 0 1 8-8v8z" fill="#f0a030"/><path d="M386 562h8a8 8 0 0 1-8 8z" fill="#2f90d8"/><circle cx="386" cy="562" r="2.500" fill="#f2f2f0"/>
<path d="M880 561l2-3 2 3z" fill="#eee"/>
<path d="M897 566h1.500v1h-1.500zM900 564h1.500v3H900zM903 562h1.500v5H903zM906 559h1.500v8H906z" fill="#eee"/>
<path d="M916 558v9M920 558v9" stroke="#eee" stroke-width="1.500"/><rect x="915" y="562" width="6" height="3" fill="#eee"/><rect x="922" y="557" width="6" height="12" fill="none" stroke="#ccc"/><rect x="922" y="563" width="6" height="6" fill="#d23030"/>
<text x="939" y="565" style="font-size:9.500px;fill:#f0f0f0">VIE</text>
<text x="989" y="559" class="c" style="font-size:9.500px;fill:#f0f0f0">20:29</text>
<text x="989" y="572" class="c" style="font-size:9.500px;fill:#f0f0f0">15/06/2021</text>
</svg>
<div id="wheel"></div>
<div id="sq"></div>
<svg width="1024" height="576" viewBox="0 0 1024 576" style="pointer-events:none">
<circle cx="112" cy="101" r="3.500" fill="none" stroke="#f4e8e8" stroke-width="1.200"/>
<circle cx="163" cy="121" r="4" fill="none" stroke="#fff" stroke-width="2"/>
</svg>
</body></html>
